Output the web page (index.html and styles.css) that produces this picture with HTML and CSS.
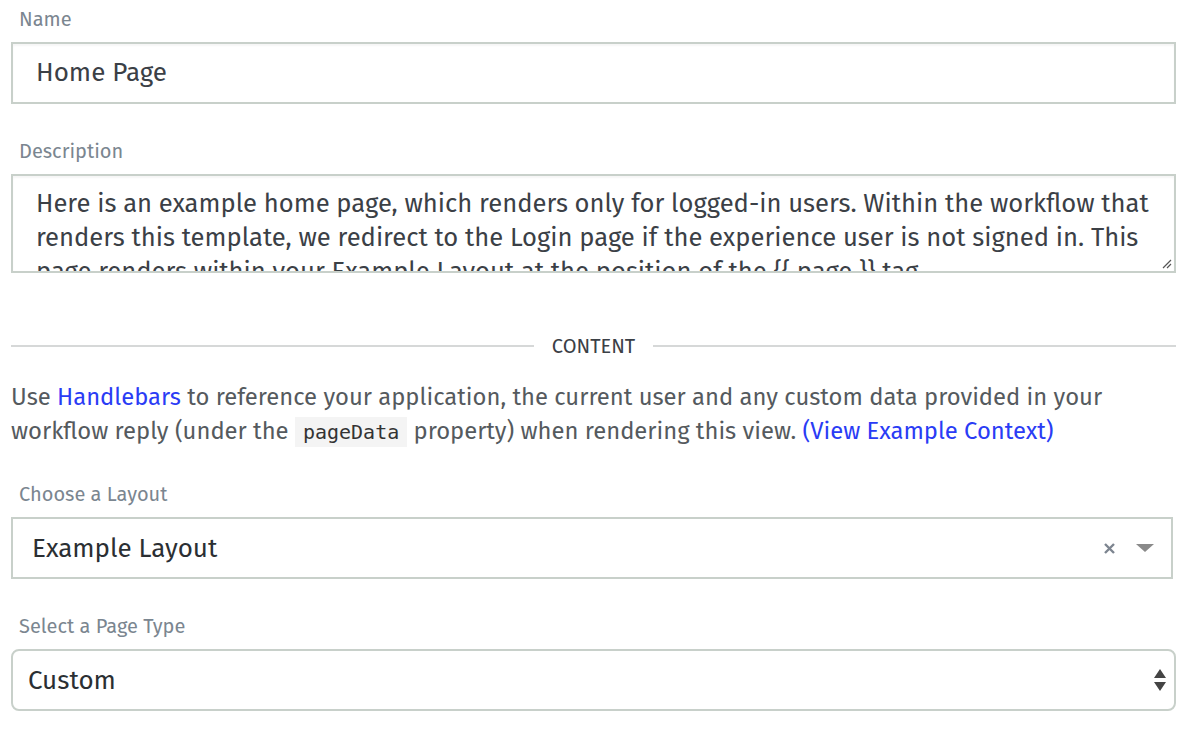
FILE: index.html
```html
<!DOCTYPE html>
<html>
<head>
<meta charset="utf-8">
<link rel="stylesheet" href="styles.css">
</head>
<body>
<div class="form">
  <div class="field">
    <label class="label">Name</label>
    <div class="input">Home Page</div>
  </div>
  <div class="field">
    <label class="label">Description</label>
    <div class="textarea">
      <div class="textarea-text">Here is an example home page, which renders only for logged-in users. Within the workflow that renders this template, we redirect to the Login page if the experience user is not signed in. This page renders within your Example Layout at the position of the {{ page }} tag.</div>
      <svg class="grip" width="12" height="12" viewBox="0 0 12 12"><path d="M11 3 L3 11 M11 7 L7 11" stroke="#555" stroke-width="1.2" fill="none"/></svg>
    </div>
  </div>
  <div class="divider"><span class="rule"></span><span class="divider-text">CONTENT</span><span class="rule"></span></div>
  <p class="help">Use <a class="link">Handlebars</a> to reference your application, the current user and any custom data provided in your workflow reply (under the <code class="code">pageData</code> property) when rendering this view. <a class="link">(View Example Context)</a></p>
  <div class="field layout-field">
    <label class="label">Choose a Layout</label>
    <div class="select">
      <span class="select-value">Example Layout</span>
      <span class="select-icons">
        <svg width="13" height="13" viewBox="0 0 13 13"><path d="M2 2 L11 11 M11 2 L2 11" stroke="#7d8590" stroke-width="2.4" fill="none"/></svg>
        <svg width="18" height="10" viewBox="0 0 18 10"><path d="M0 1 L18 1 L9 9 Z" fill="#8a8a8a"/></svg>
      </span>
    </div>
  </div>
  <div class="field">
    <label class="label">Select a Page Type</label>
    <div class="native-select">
      <span class="select-value2">Custom</span>
      <svg width="12" height="24" viewBox="0 0 12 24"><path d="M6 1 L12 10 L0 10 Z M0 14 L12 14 L6 23 Z" fill="#444"/></svg>
    </div>
  </div>
</div>
</body>
</html>
```

FILE: styles.css
```css
* { box-sizing: border-box; }
body {
  margin: 0;
  padding: 0 24px 0 11px;
  background: #fff;
  font-family: "Fira Sans", "Lato", "Liberation Sans", sans-serif;
  color: #3b4046;
}
.form { display: flex; flex-direction: column; }
.field { display: flex; flex-direction: column; }
.label {
  font-size: 20px;
  color: #7b8690;
  padding: 7px 0 0 8px;
  height: 42px;
  line-height: 24px;
}
.input {
  height: 62px;
  border: 2px solid #c8d0ca;
  box-shadow: inset 0 2px 2px rgba(0,0,0,0.04);
  padding: 0 23px;
  font-size: 26px;
  line-height: 58px;
  color: #3b4046;
  margin-bottom: 28px;
}
.textarea {
  position: relative;
  height: 99px;
  border: 2px solid #c8d0ca;
  box-shadow: inset 0 2px 2px rgba(0,0,0,0.04);
  padding: 11px 10px 0 23px;
  overflow: hidden;
}
.textarea-text {
  font-size: 25.6px;
  line-height: 34px;
  color: #3b4046;
}
.grip { position: absolute; right: 2px; bottom: 2px; }
.divider {
  display: flex;
  align-items: center;
  margin-top: 60px;
  height: 26px;
}
.rule { flex: 1; height: 2px; background: #d6d8d8; }
.divider-text {
  font-size: 20px;
  padding: 0 18px;
  color: #3b4046;
}
.help {
  margin: 21px 0 0;
  font-size: 23.8px;
  line-height: 34px;
  color: #555a5e;
}
.link { color: #2a3cf5; }
.code {
  font-family: "DejaVu Sans Mono", monospace;
  font-size: 20px;
  line-height: 24px;
  background: #f4f4f4;
  padding: 3px 8px;
  color: #333;
}
.layout-field { margin-top: 27px; }
.select {
  height: 62px;
  border: 2px solid #c8d0ca;
  margin-right: 3px;
  display: flex;
  align-items: center;
  justify-content: space-between;
  padding: 0 17px 0 19px;
  margin-bottom: 28px;
}
.select-value { font-size: 26px; color: #2b2f33; }
.select-icons { display: flex; align-items: center; gap: 20px; }
.native-select {
  height: 62px;
  border: 2px solid #c8d0ca;
  border-radius: 8px;
  display: flex;
  align-items: center;
  justify-content: space-between;
  padding: 0 8px 0 15px;
}
.select-value2 { font-size: 26px; color: #2b2f33; }
```
